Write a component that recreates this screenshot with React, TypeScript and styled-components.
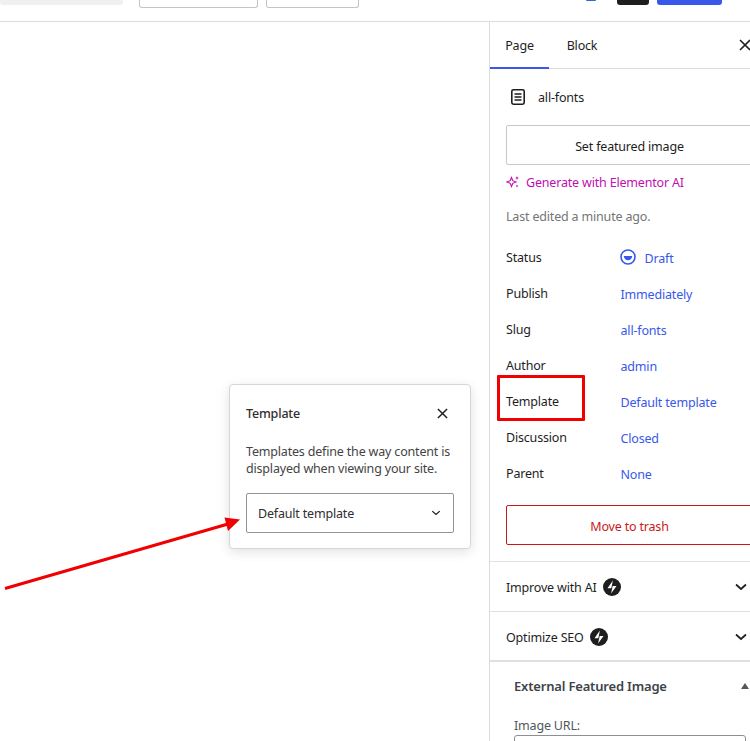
import React from 'react'
import styled, { createGlobalStyle } from 'styled-components'

const GlobalStyle = createGlobalStyle`
  html, body {
    margin: 0;
    padding: 0;
    background: #fff;
  }
  * {
    box-sizing: border-box;
  }
`

const Page = styled.div`
  color: #1e1e1e;
  display: flex;
  flex-direction: column;
  font-family: 'Noto Sans', 'Open Sans', sans-serif;
  font-size: 12.5px;
  height: 741px;
  letter-spacing: -0.18px;
  overflow: hidden;
  position: relative;
  width: 750px;
`

const TopBar = styled.div`
  align-items: flex-start;
  border-bottom: 1px solid #dcdcdc;
  display: flex;
  flex: none;
  height: 22px;
  padding-right: 28px;
`

const BarSlot = styled.div<{ $w: number; $h: number; $bg?: string; $line?: boolean; $ml?: number; $round?: number }>`
  background: ${(p) => p.$bg || '#fff'};
  border: ${(p) => (p.$line ? '1px solid #c4c4c4' : 'none')};
  border-top: none;
  border-radius: 0 0 ${(p) => p.$round ?? 3}px ${(p) => p.$round ?? 3}px;
  flex: none;
  height: ${(p) => p.$h}px;
  margin-left: ${(p) => p.$ml || 0}px;
  width: ${(p) => p.$w}px;
`

const BarSpacer = styled.div`
  flex: 1;
`

const Body = styled.div`
  display: flex;
  flex: 1;
  min-height: 0;
`

const Canvas = styled.div`
  flex: none;
  width: 489px;
`

const Sidebar = styled.div`
  border-left: 1px solid #dcdcdc;
  flex: none;
  width: 280px;
`

const Tabs = styled.div`
  align-items: center;
  border-bottom: 1px solid #dcdcdc;
  display: flex;
  height: 47px;
  position: relative;
`

const Tab = styled.div<{ $active?: boolean }>`
  align-items: center;
  box-shadow: ${(p) => (p.$active ? 'inset 0 -2px 0 #3858e9' : 'none')};
  display: flex;
  height: 47px;
  justify-content: center;
  margin-bottom: -1px;
  width: ${(p) => (p.$active ? 59 : 66)}px;
`

const TabClose = styled.div`
  display: flex;
  margin-left: auto;
  margin-right: 18px;
`

const PostPanel = styled.div`
  border-bottom: 1px solid #e0e0e0;
  padding: 0 16px 16px;
`

const TitleRow = styled.div`
  align-items: center;
  display: flex;
  height: 56px;
  margin-right: -5px;
`

const TitleText = styled.div`
  flex: 1;
  margin-left: 10px;
`

const WideButton = styled.div<{ $danger?: boolean }>`
  align-items: center;
  border: 1px solid ${(p) => (p.$danger ? '#cc1818' : '#c8c8c8')};
  border-radius: 2px;
  color: ${(p) => (p.$danger ? '#cc1818' : '#1e1e1e')};
  display: flex;
  height: 40px;
  justify-content: center;
  padding-top: 2px;
`

const GenerateLink = styled.div`
  align-items: center;
  color: #c00fb0;
  display: flex;
  gap: 6px;
  height: 18px;
  margin-top: 8px;
`

const Edited = styled.div`
  color: #757575;
  height: 17px;
  margin-top: 17px;
`

const Rows = styled.div`
  margin-top: 14px;
  margin-bottom: 14px;
`

const Row = styled.div`
  align-items: center;
  display: grid;
  grid-template-columns: 114px 1fr;
  height: 36px;
`

const RowValue = styled.div`
  align-items: center;
  color: #3858e9;
  display: flex;
  gap: 9px;
  padding-left: 0.5px;
  padding-top: 2px;
`

const StatusIcon = styled.svg`
  margin-left: -1px;
  margin-top: -2px;
`

const Collapsed = styled.div<{ $heavy?: boolean }>`
  align-items: center;
  border-bottom: ${(p) => (p.$heavy ? 2 : 1)}px solid #e0e0e0;
  display: flex;
  gap: 6px;
  height: 50px;
  padding: ${(p) => (p.$heavy ? 2 : 1)}px 0 0 16px;
`

const CollapsedChevron = styled.div`
  display: flex;
  margin-left: auto;
  margin-right: 20px;
`

const MetaBox = styled.div`
  padding: 0 24px;
`

const MetaHeading = styled.div`
  align-items: center;
  color: #3c434a;
  display: flex;
  font-size: 13px;
  font-weight: 600;
  height: 48px;
`

const MetaCaret = styled.div`
  border-bottom: 6px solid #50575e;
  border-left: 4px solid transparent;
  border-right: 4px solid transparent;
  margin-left: auto;
  margin-right: -4px;
`

const MetaLabel = styled.div`
  color: #50575e;
  margin-top: 7px;
`

const MetaInput = styled.div`
  border: 1px solid #8c8f94;
  border-radius: 3px;
  height: 30px;
  margin-top: 1px;
  width: 232px;
`

const Popover = styled.div`
  background: #fff;
  border: 1px solid #d6d6d6;
  border-radius: 4px;
  box-shadow: 0 3px 12px rgba(0, 0, 0, 0.12);
  height: 165px;
  left: 229px;
  padding: 16px;
  position: absolute;
  top: 384px;
  width: 242px;
`

const PopoverHead = styled.div`
  align-items: center;
  color: #2f2f2f;
  display: flex;
  font-weight: 500;
  height: 24px;
  justify-content: space-between;
  padding-right: 6px;
`

const PopoverText = styled.div`
  color: #444;
  line-height: 17px;
  margin-top: 18px;
  white-space: nowrap;
`

const SelectBox = styled.div`
  align-items: center;
  border: 1px solid #949494;
  border-radius: 2px;
  color: #2f2f2f;
  display: flex;
  height: 40px;
  justify-content: space-between;
  margin-top: 16px;
  padding: 0 11px;
`

const Highlight = styled.div`
  border: 3px solid #f00000;
  border-radius: 1px;
  height: 46px;
  left: 497px;
  position: absolute;
  top: 375px;
  width: 88px;
`

const Arrow = styled.svg`
  left: 0;
  position: absolute;
  top: 510px;
`

const Chevron = ({ size = 16 }: { size?: number }) => (
  <svg width={size} height={size} viewBox="0 0 16 16" fill="none" stroke="#1e1e1e" strokeWidth="1.7">
    <path d="M3 5.5l5 4.5 5-4.5" />
  </svg>
)

const Close = ({ size = 12 }: { size?: number }) => (
  <svg width={size} height={size} viewBox="0 0 12 12" fill="none" stroke="#1e1e1e" strokeWidth="1.6">
    <path d="M1 1l10 10M11 1L1 11" />
  </svg>
)

const Bolt = () => (
  <svg width="18" height="18" viewBox="0 0 16 16">
    <circle cx="8" cy="8" r="8" fill="#1e1e1e" />
    <path d="M8.8 2.2L4 9h3.4L8.8 2.2zM7.2 13.8L12 7H8.6L7.2 13.8z" fill="#fff" />
  </svg>
)

const rows = [
  { label: 'Publish', value: 'Immediately' },
  { label: 'Slug', value: 'all-fonts' },
  { label: 'Author', value: 'admin' },
  { label: 'Template', value: 'Default template' },
  { label: 'Discussion', value: 'Closed' },
  { label: 'Parent', value: 'None' },
]

export default function App() {
  return (
    <Page>
      <GlobalStyle />
      <TopBar>
        <BarSlot $w={123} $h={5} $bg="#f0f0f0" />
        <BarSlot $w={119} $h={8} $line $ml={16} />
        <BarSlot $w={93} $h={8} $line $ml={8} />
        <BarSpacer />
        <BarSlot $w={10} $h={1} $bg="#2a6fd6" $round={5} />
        <BarSlot $w={32} $h={5} $bg="#1e1e1e" $ml={21} />
        <BarSlot $w={65} $h={5} $bg="#3858e9" $ml={8} />
      </TopBar>
      <Body>
        <Canvas />
        <Sidebar>
          <Tabs>
            <Tab $active>Page</Tab>
            <Tab>Block</Tab>
            <TabClose>
              <Close />
            </TabClose>
          </Tabs>
          <PostPanel>
            <TitleRow>
              <svg width="22" height="22" viewBox="0 0 22 22" fill="none" stroke="#1e1e1e" strokeWidth="1.6">
                <rect x="5.8" y="3.8" width="12.4" height="14.4" rx="1.6" />
                <path d="M8.5 8h7M8.5 11h7M8.5 14h7" />
              </svg>
              <TitleText>all-fonts</TitleText>
              <svg width="4" height="16" viewBox="0 0 4 16" fill="#1e1e1e">
                <circle cx="2" cy="2.5" r="1.4" />
                <circle cx="2" cy="8" r="1.4" />
                <circle cx="2" cy="13.5" r="1.4" />
              </svg>
            </TitleRow>
            <WideButton>Set featured image</WideButton>
            <GenerateLink>
              <svg width="14" height="14" viewBox="0 0 14 14" fill="#c00fb0">
                <path d="M5.5 2.5l1.3 3.2 3.2 1.3-3.2 1.3-1.3 3.2-1.3-3.2L1 7l3.2-1.3z" fill="none" stroke="#c00fb0" strokeWidth="1.1" />
                <path d="M11 1l.6 1.4L13 3l-1.4.6L11 5l-.6-1.4L9 3l1.4-.6zM11 9.5l.4 1.1 1.1.4-1.1.4-.4 1.1-.4-1.1-1.1-.4 1.1-.4z" />
              </svg>
              Generate with Elementor AI
            </GenerateLink>
            <Edited>Last edited a minute ago.</Edited>
            <Rows>
              <Row>
                <div>Status</div>
                <RowValue>
                  <StatusIcon width="16" height="16" viewBox="0 0 16 16">
                    <circle cx="8" cy="8" r="7" fill="none" stroke="#3858e9" strokeWidth="1.6" />
                    <path d="M3.8 7h8.4A4.2 4.2 0 0 1 3.8 7z" fill="#3858e9" />
                  </StatusIcon>
                  Draft
                </RowValue>
              </Row>
              {rows.map((row) => (
                <Row key={row.label}>
                  <div>{row.label}</div>
                  <RowValue>{row.value}</RowValue>
                </Row>
              ))}
            </Rows>
            <WideButton $danger>Move to trash</WideButton>
          </PostPanel>
          <Collapsed>
            Improve with AI
            <Bolt />
            <CollapsedChevron>
              <Chevron />
            </CollapsedChevron>
          </Collapsed>
          <Collapsed $heavy>
            Optimize SEO
            <Bolt />
            <CollapsedChevron>
              <Chevron />
            </CollapsedChevron>
          </Collapsed>
          <MetaBox>
            <MetaHeading>
              External Featured Image
              <MetaCaret />
            </MetaHeading>
            <MetaLabel>Image URL:</MetaLabel>
            <MetaInput />
          </MetaBox>
        </Sidebar>
      </Body>
      <Popover>
        <PopoverHead>
          Template
          <Close size={11} />
        </PopoverHead>
        <PopoverText>
          Templates define the way content is
          <br />
          displayed when viewing your site.
        </PopoverText>
        <SelectBox>
          Default template
          <Chevron size={12} />
        </SelectBox>
      </Popover>
      <Highlight />
      <Arrow width="245" height="90" viewBox="0 0 245 90">
        <path d="M5 78.5L228 14" stroke="#f00000" strokeWidth="3" fill="none" />
        <path d="M240 9.5L224.5 7.5L228 21z" fill="#f00000" />
      </Arrow>
    </Page>
  )
}
